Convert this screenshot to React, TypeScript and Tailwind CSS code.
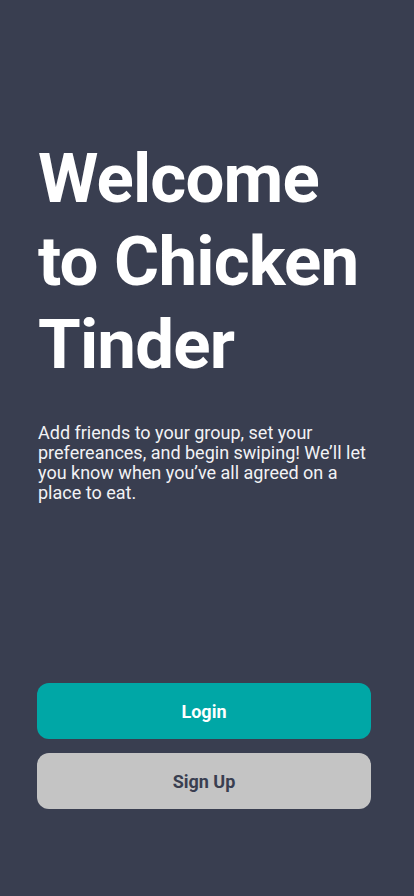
export default function App() {
  return (
    <div
      className="flex min-h-[896px] flex-col bg-[#393e50] pl-[37px] pr-[43px] pt-[137px] pb-[87px] text-white"
      style={{ fontFamily: "Roboto, 'Liberation Sans', sans-serif" }}
    >
      <h1 className="pl-px text-[69px] font-bold leading-[83px] tracking-[-0.012em]">
        Welcome to Chicken Tinder
      </h1>
      <p className="mt-[37px] pl-px text-[18px] leading-[20px] text-[#f2f2f5]">
        Add friends to your group, set your prefereances, and begin swiping! We’ll let you know when
        you’ve all agreed on a place to eat.
      </p>
      <div className="flex-1" />
      <div className="flex flex-col gap-[14px]">
        <button
          type="button"
          className="h-[56px] rounded-[12px] bg-[#00a7a6] text-[18px] font-bold text-white"
        >
          Login
        </button>
        <button
          type="button"
          className="h-[56px] rounded-[12px] bg-[#c4c4c4] text-[18px] font-bold text-[#393e50]"
        >
          Sign Up
        </button>
      </div>
    </div>
  );
}
